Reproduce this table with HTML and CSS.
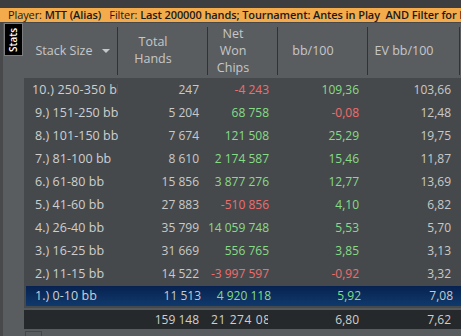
FILE: index.html
```html
<!DOCTYPE html>
<html>
<head>
<meta charset="utf-8">
<link rel="stylesheet" href="styles.css">
</head>
<body>
<div class="topstrip"></div>
<div class="filterbar">Player: <b>MTT (Alias)</b>&nbsp;&nbsp; Filter: <b>Last 200000 hands; Tournament: Antes in Play&nbsp; AND Filter for Mes</b></div>
<div class="sepline"></div>
<div class="main">
  <div class="sidebar">
    <div class="tab"><span>Stats</span></div>
  </div>
  <div class="content">
    <div class="header grid">
      <div class="hcell first"><span>Stack Size</span><i class="arrow"></i></div>
      <div class="hcell">Total<br>Hands</div>
      <div class="hcell">Net<br>Won<br>Chips</div>
      <div class="hcell">bb/100</div>
      <div class="hcell">EV bb/100</div>
    </div>
    <div class="rows">
      <div class="row grid"><div class="c label l10">10.) 250-350 bb</div><div class="c">247</div><div class="c red">-4 243</div><div class="c green">109,36</div><div class="c">103,66</div></div>
      <div class="row grid"><div class="c label">9.) 151-250 bb</div><div class="c">5 204</div><div class="c green">68 758</div><div class="c red">-0,08</div><div class="c">12,48</div></div>
      <div class="row grid"><div class="c label">8.) 101-150 bb</div><div class="c">7 674</div><div class="c green">121 508</div><div class="c green">25,29</div><div class="c">19,75</div></div>
      <div class="row grid"><div class="c label">7.) 81-100 bb</div><div class="c">8 610</div><div class="c green">2 174 587</div><div class="c green">15,46</div><div class="c">11,87</div></div>
      <div class="row grid"><div class="c label">6.) 61-80 bb</div><div class="c">15 856</div><div class="c green">3 877 276</div><div class="c green">12,77</div><div class="c">13,69</div></div>
      <div class="row grid"><div class="c label">5.) 41-60 bb</div><div class="c">27 883</div><div class="c red">-510 856</div><div class="c green">4,10</div><div class="c">6,82</div></div>
      <div class="row grid"><div class="c label">4.) 26-40 bb</div><div class="c">35 799</div><div class="c green">14 059 748</div><div class="c green">5,53</div><div class="c">5,70</div></div>
      <div class="row grid"><div class="c label">3.) 16-25 bb</div><div class="c">31 669</div><div class="c green">556 765</div><div class="c green">3,85</div><div class="c">3,13</div></div>
      <div class="row grid"><div class="c label">2.) 11-15 bb</div><div class="c">14 522</div><div class="c red">-3 997 597</div><div class="c red">-0,92</div><div class="c">3,32</div></div>
      <div class="row grid selected"><div class="c label">1.) 0-10 bb</div><div class="c">11 513</div><div class="c green">4 920 118</div><div class="c green">5,92</div><div class="c">7,08</div></div>
    </div>
    <div class="totals grid">
      <div class="c"></div>
      <div class="c">159 148</div>
      <div class="c clip"><div class="clipin">21 274 086</div></div>
      <div class="c">6,80</div>
      <div class="c">7,62</div>
    </div>
    <div class="bottom"><div class="scroll"></div></div>
  </div>
</div>
</body>
</html>
```

FILE: styles.css
```css
html, body {
  margin: 0;
  padding: 0;
}
body {
  width: 461px;
  height: 336px;
  overflow: hidden;
  background: #3c3e40;
  font-family: "Open Sans", "Noto Sans", sans-serif;
  font-size: 12px;
  color: #c9c9c9;
}
.topstrip {
  height: 8px;
  background: #3c3e40;
}
.filterbar {
  height: 14px;
  line-height: 14px;
  background: #f3ab4c;
  color: #1a1a1a;
  padding-left: 8px;
  white-space: nowrap;
  overflow: hidden;
  font-size: 11px;
  letter-spacing: -0.1px;
}
.filterbar b {
  font-weight: 600;
}
.sepline {
  height: 1px;
  background: #46484a;
}
.main {
  display: flex;
  height: 313px;
}
.sidebar {
  width: 21px;
  border-left: 3px solid #47494b;
  background: #5a5d60;
  flex: none;
}
.tab {
  margin-left: 1px;
  width: 17px;
  height: 31px;
  background: #000;
  border: 1px solid #7a7c7e;
  display: flex;
  align-items: center;
  justify-content: center;
}
.tab span {
  transform: rotate(-90deg);
  color: #fff;
  font-size: 10px;
  font-weight: 600;
  white-space: nowrap;
}
.content {
  width: 437px;
  display: flex;
  flex-direction: column;
  background: #56595c;
}
.grid {
  display: grid;
  grid-template-columns: 94px 90px 70px 90px 92px 1px;
}
.header {
  height: 56px;
  background: #5a5d60;
}
.hcell {
  position: relative;
  display: flex;
  align-items: center;
  justify-content: center;
  text-align: center;
  line-height: 17px;
  padding-right: 20px;
  color: #c6c7c8;
  font-size: 12.5px;
}
.hcell::after {
  content: "";
  position: absolute;
  right: 0;
  top: 4px;
  bottom: 3px;
  width: 1px;
  background: #303234;
}
.hcell.first {
  padding-right: 14px;
}
.arrow {
  position: absolute;
  right: 8px;
  top: 26px;
  width: 0;
  height: 0;
  border-left: 4px solid transparent;
  border-right: 4px solid transparent;
  border-top: 4px solid #c6c7c8;
}
.rows {
  background: #46494c;
}
.row {
  height: 23px;
  box-sizing: border-box;
}
.c {
  display: flex;
  align-items: center;
  justify-content: flex-end;
  padding-right: 9px;
  white-space: nowrap;
  overflow: hidden;
}
.c.label {
  justify-content: flex-start;
  padding-left: 11px;
  padding-right: 0;
  color: #cfcfcf;
  font-size: 12.5px;
  letter-spacing: 0.05px;
}
.c.label.l10 {
  padding-left: 8px;
  letter-spacing: 0.2px;
}
.green {
  color: #86dc86;
}
.red {
  color: #ef6d6d;
}
.selected {
  border-top: 1px solid #46494c;
  border-bottom: 2px solid #46494c;
  border-left: 2px solid #46494c;
  background: linear-gradient(#072250, #0f3a6c);
}
.selected .c.label {
  padding-left: 9px;
}
.totals {
  margin-top: 2px;
  height: 20px;
  background: #26292b;
}
.totals .c {
  color: #cfcfcf;
}
.totals .c.clip {
  justify-content: flex-start;
  padding-left: 3px;
  padding-right: 0;
}
.clipin {
  width: 57px;
  overflow: hidden;
  white-space: nowrap;
  letter-spacing: 0.6px;
}
.bottom {
  flex: 1;
  background: #595c5f;
  position: relative;
}
.scroll {
  margin-top: 2px;
  margin-left: 1px;
  width: 15px;
  height: 4px;
  border-left: 1px solid #45474a;
  border-right: 1px solid #45474a;
  border-top: 1px solid #45474a;
}
```
